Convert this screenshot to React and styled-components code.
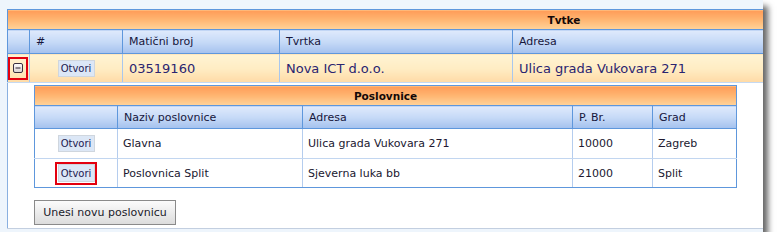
import React from "react";
import styled, { createGlobalStyle } from "styled-components";

const Global = createGlobalStyle`
  html, body { margin: 0; padding: 0; background: #ffffff; }
  body { font-family: "DejaVu Sans", Verdana, sans-serif; }
`;

const Panel = styled.div`
  width: 763px;
  height: 232px;
  box-sizing: border-box;
  padding: 9px 0 0 7px;
  background: #eef5fc;
  overflow: hidden;
  box-shadow: 5px 6px 6px rgba(0, 0, 0, 0.6);
`;

const Grid = styled.table`
  width: ${(p) => p.$w}px;
  border-collapse: collapse;
  table-layout: fixed;
  background: #ffffff;
  font-family: "DejaVu Sans", Verdana, sans-serif;
`;

const Col = styled.col`
  width: ${(p) => (p.$w ? `${p.$w}px` : "auto")};
`;

const TitleCell = styled.td`
  height: ${(p) => p.$h}px;
  padding: 0;
  box-sizing: border-box;
  border: 1px solid #5e97dc;
  background: linear-gradient(to bottom, #ff9c58 0%, #ffb672 50%, #ffd39a 100%);
  font-weight: bold;
  font-size: 10.5px;
  color: #140808;
  text-align: center;
  vertical-align: middle;
`;

const HeadCell = styled.th`
  height: ${(p) => p.$h}px;
  padding: 0 0 0 6px;
  box-sizing: border-box;
  border: 1px solid #5e97dc;
  border-top: none;
  background: linear-gradient(to bottom, #dfeafc 0%, #c6daf7 50%, #a4c1ee 100%);
  font-weight: normal;
  font-size: 11px;
  color: #16163c;
  text-align: left;
  vertical-align: middle;
  white-space: nowrap;
  overflow: hidden;
`;

const MainCell = styled.td`
  height: 29px;
  padding: 0 0 0 ${(p) => (p.$align === "left" ? 6 : 0)}px;
  box-sizing: border-box;
  border-left: 1px solid #a8c7ee;
  border-bottom: 1px solid #c5d9f2;
  background: linear-gradient(to bottom, #fff4d3 0%, #ffedc4 50%, #ffdaa6 100%);
  font-size: 13px;
  color: #2a2470;
  text-align: ${(p) => (p.$align === "center" ? "center" : "left")};
  vertical-align: middle;
  white-space: nowrap;
  overflow: hidden;
  &:first-child { border-left: 1px solid #5e97dc; }
`;

const DetailCell = styled.td`
  padding: 2px 0 3px 26px;
  border-left: 1px solid #8ab0e0;
  border-bottom: 1px solid #c3cfe0;
  background: #ffffff;
  vertical-align: top;
`;

const SubCell = styled.td`
  height: ${(p) => p.$h}px;
  padding: 0 0 0 ${(p) => (p.$center ? 0 : 5)}px;
  box-sizing: border-box;
  border-left: 1px solid #b5cdee;
  border-bottom: 1px solid ${(p) => (p.$last ? "#5e97dc" : "#c2d6f0")};
  font-size: 11px;
  color: #201830;
  text-align: ${(p) => (p.$center ? "center" : "left")};
  vertical-align: middle;
  white-space: nowrap;
  overflow: hidden;
  &:first-child { border-left: 1px solid #5e97dc; }
  &:last-child { border-right: 1px solid #5e97dc; }
`;

const LinkButton = styled.button`
  width: 37px;
  height: ${(p) => p.$h || 17}px;
  padding: 0;
  margin: 0;
  border: 1px solid #cfd6de;
  background: #dce7f6;
  font-family: "DejaVu Sans", Verdana, sans-serif;
  font-size: 10px;
  color: #1e1a50;
  cursor: pointer;
  vertical-align: middle;
`;

const Highlight = styled.span`
  display: inline-flex;
  align-items: center;
  justify-content: center;
  box-sizing: border-box;
  width: ${(p) => p.$w}px;
  height: ${(p) => p.$h}px;
  border: 2px solid #e3000f;
  vertical-align: middle;
`;

const BigButton = styled.button`
  display: block;
  margin-top: 12px;
  width: 142px;
  height: 25px;
  padding: 0;
  border: 1px solid #8a8a8a;
  background: linear-gradient(to bottom, #fbfbfb 0%, #ececec 50%, #dcdcdc 100%);
  font-family: "DejaVu Sans", Verdana, sans-serif;
  font-size: 11px;
  color: #1a1a2a;
  cursor: pointer;
`;

const MinusIcon = () => (
  <svg width="10" height="10" viewBox="0 0 10 10" style={{ display: "block" }}>
    <defs>
      <linearGradient id="mg" x1="0" y1="0" x2="0" y2="1">
        <stop offset="0" stopColor="#ffffff" />
        <stop offset="1" stopColor="#d8d0d0" />
      </linearGradient>
    </defs>
    <rect x="0.5" y="0.5" width="9" height="9" rx="1.5" fill="url(#mg)" stroke="#3a3040" strokeWidth="1" />
    <rect x="2.5" y="4.5" width="5" height="1" fill="#2a2030" />
  </svg>
);

const branches = [
  { naziv: "Glavna", adresa: "Ulica grada Vukovara 271", pbr: "10000", grad: "Zagreb" },
  { naziv: "Poslovnica Split", adresa: "Sjeverna luka bb", pbr: "21000", grad: "Split" },
];

export default function App() {
  return (
    <>
      <Global />
      <Panel>
        <Grid $w={1114}>
          <colgroup>
            <Col $w={22} />
            <Col $w={93} />
            <Col $w={157} />
            <Col $w={233} />
            <Col />
          </colgroup>
          <thead>
            <tr>
              <TitleCell colSpan={5} $h={20}>Tvtke</TitleCell>
            </tr>
            <tr>
              <HeadCell $h={24}></HeadCell>
              <HeadCell $h={24}>#</HeadCell>
              <HeadCell $h={24}>Matični broj</HeadCell>
              <HeadCell $h={24}>Tvrtka</HeadCell>
              <HeadCell $h={24}>Adresa</HeadCell>
            </tr>
          </thead>
          <tbody>
            <tr>
              <MainCell $align="flush">
                <Highlight $w={20} $h={23}>
                  <MinusIcon />
                </Highlight>
              </MainCell>
              <MainCell $align="center">
                <LinkButton>Otvori</LinkButton>
              </MainCell>
              <MainCell $align="left">03519160</MainCell>
              <MainCell $align="left">Nova ICT d.o.o.</MainCell>
              <MainCell $align="left">Ulica grada Vukovara 271</MainCell>
            </tr>
            <tr>
              <DetailCell colSpan={5}>
                <Grid $w={703}>
                  <colgroup>
                    <Col $w={83} />
                    <Col $w={185} />
                    <Col $w={270} />
                    <Col $w={80} />
                    <Col />
                  </colgroup>
                  <thead>
                    <tr>
                      <TitleCell colSpan={5} $h={20}>Poslovnice</TitleCell>
                    </tr>
                    <tr>
                      <HeadCell $h={23}></HeadCell>
                      <HeadCell $h={23}>Naziv poslovnice</HeadCell>
                      <HeadCell $h={23}>Adresa</HeadCell>
                      <HeadCell $h={23}>P. Br.</HeadCell>
                      <HeadCell $h={23}>Grad</HeadCell>
                    </tr>
                  </thead>
                  <tbody>
                    {branches.map((b, i) => {
                      const last = i === branches.length - 1;
                      const h = i === 0 ? 30 : 29;
                      return (
                        <tr key={b.naziv}>
                          <SubCell $center $h={h} $last={last}>
                            {last ? (
                              <Highlight $w={42} $h={23}>
                                <LinkButton $h={18}>Otvori</LinkButton>
                              </Highlight>
                            ) : (
                              <LinkButton>Otvori</LinkButton>
                            )}
                          </SubCell>
                          <SubCell $h={h} $last={last}>{b.naziv}</SubCell>
                          <SubCell $h={h} $last={last}>{b.adresa}</SubCell>
                          <SubCell $h={h} $last={last}>{b.pbr}</SubCell>
                          <SubCell $h={h} $last={last}>{b.grad}</SubCell>
                        </tr>
                      );
                    })}
                  </tbody>
                </Grid>
                <BigButton>Unesi novu poslovnicu</BigButton>
              </DetailCell>
            </tr>
          </tbody>
        </Grid>
      </Panel>
    </>
  );
}
